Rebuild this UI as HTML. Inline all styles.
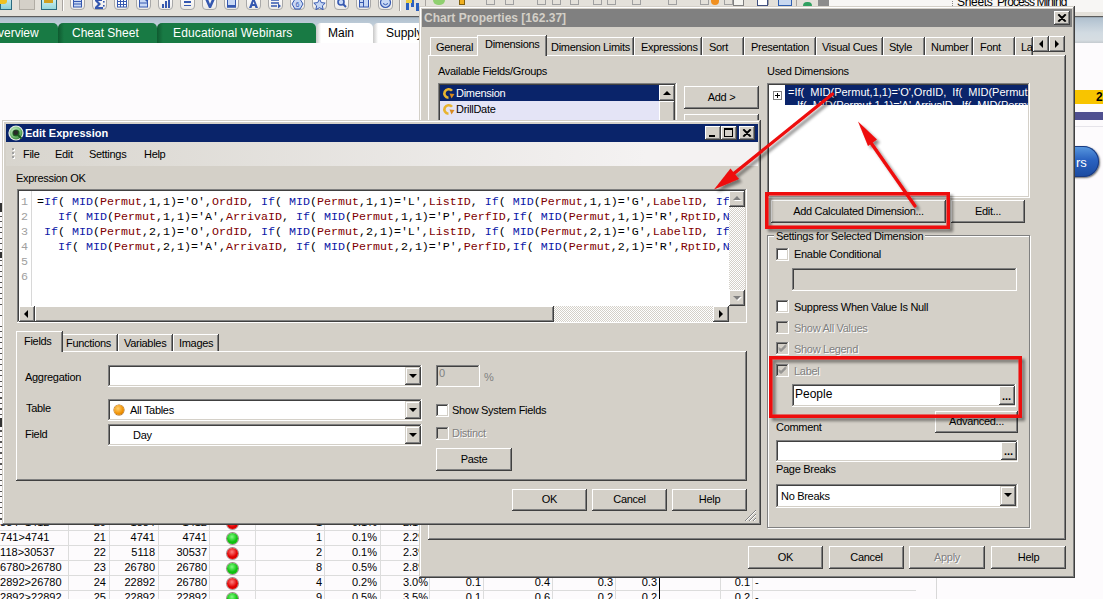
<!DOCTYPE html>
<html><head><meta charset="utf-8">
<style>
*{box-sizing:border-box;margin:0;padding:0}
html,body{width:1103px;height:599px;overflow:hidden;background:#fdfbfd}
body{position:relative;font-family:"Liberation Sans",sans-serif;font-size:11px;color:#000}
.a{position:absolute}
.t{position:absolute;white-space:pre;line-height:13px;letter-spacing:-0.3px}
.face{background:#d4d0c8}
.raised{background:#d4d0c8;box-shadow:inset -1px -1px #404040,inset 1px 1px #fff,inset -2px -2px #808080,inset 2px 2px #d4d0c8}
.sunken{background:#fff;box-shadow:inset -1px -1px #fff,inset 1px 1px #808080,inset -2px -2px #d4d0c8,inset 2px 2px #404040}
.sunkend{background:#d4d0c8;box-shadow:inset -1px -1px #fff,inset 1px 1px #808080,inset -2px -2px #d4d0c8,inset 2px 2px #404040}
.win{background:#d4d0c8;box-shadow:inset -1px -1px #404040,inset 1px 1px #d4d0c8,inset -2px -2px #808080,inset 2px 2px #fff}
.btn{position:absolute;background:#d4d0c8;box-shadow:inset -1px -1px #404040,inset 1px 1px #fff,inset -2px -2px #808080,inset 2px 2px #d4d0c8;text-align:center;white-space:pre;letter-spacing:-0.3px}
.chk{position:absolute;width:13px;height:13px;background:#fff;box-shadow:inset -1px -1px #fff,inset 1px 1px #808080,inset -2px -2px #d4d0c8,inset 2px 2px #404040}
.chk.dis{background:#d4d0c8}
.gray{color:#808080;text-shadow:1px 1px #fff}
.page{position:absolute;background:#d4d0c8;box-shadow:inset -1px -1px #404040,inset 1px 1px #fff,inset -2px -2px #808080}
.tab{position:absolute;background:#d4d0c8;box-shadow:inset -1px 0 #404040,inset 1px 1px #fff,inset -2px 0 #808080;white-space:pre;letter-spacing:-0.3px}
.dd{position:absolute;width:16px;background:#d4d0c8;box-shadow:inset -1px -1px #404040,inset 1px 1px #d4d0c8,inset -2px -2px #808080,inset 2px 2px #fff}
.dd:after{content:"";position:absolute;left:4px;top:7px;border-left:4px solid transparent;border-right:4px solid transparent;border-top:4px solid #000}
.code{position:absolute;font-family:"Liberation Mono",monospace;font-size:11.67px;white-space:pre;line-height:15px;color:#000}
.dith{background-color:#e8e6e2;background-image:repeating-conic-gradient(#d4d0c8 0 25%,#fff 0 50%);background-size:2px 2px}
.k{color:#0c18a8}.f{color:#800000}
</style></head><body>

<!-- ============ BACKGROUND APP ============ -->
<div class="a" style="left:0;top:0;width:1103px;height:16px;background:#e4e1da"></div>
<div class="a" style="left:829px;top:0;width:274px;height:12px;background:#f7f6f4"></div>
<div class="a" style="left:0;top:0;width:12px;height:10px;background:linear-gradient(#bfe6ea,#8fd0d8);border:1px solid #2a6a80;border-top:0"></div>
<div class="a" style="left:0;top:0;width:7px;height:4px;background:#f0c020;border-radius:0 0 3px 0"></div>
<div class="a" style="left:19px;top:0;width:16px;height:10px;background:#d4d0c8;border:1px solid #b0aca4;border-top:0"></div>
<div class="a" style="left:41px;top:0;width:16px;height:10px;background:linear-gradient(#c8eef0,#98d8dc);border:1px solid #2a6a80;border-top:0"></div>
<div class="a" style="left:44px;top:0;width:9px;height:3px;background:#d0a020"></div>
<div class="a" style="left:62px;top:0;width:1px;height:11px;background:#a8a4a0;box-shadow:1px 0 #fff"></div>
<div class="a" style="left:70px;top:-4px;width:15px;height:14px;border:1px solid #a8a8a8;border-radius:4px;background:linear-gradient(#fff,#eceae6)"></div>
<svg class="a" style="left:70px;top:0" width="15" height="10"><rect x="3.5" y="-1" width="8" height="8" fill="#c8d8f4" stroke="#3558b0"/><path d="M4 1.5h7M4 4h7" stroke="#3558b0"/></svg>
<div class="a" style="left:92px;top:-4px;width:15px;height:14px;border:1px solid #a8a8a8;border-radius:4px;background:linear-gradient(#fff,#eceae6)"></div>
<svg class="a" style="left:92px;top:0" width="15" height="10"><path d="M3 -1h7v2H6l3 3-3 3h5v2H3V7l3-3-3-3z" fill="#3558b0"/><rect x="11" y="1" width="1.6" height="1.6" fill="#3558b0"/><rect x="11" y="5" width="1.6" height="1.6" fill="#3558b0"/></svg>
<div class="a" style="left:114px;top:-4px;width:15px;height:14px;border:1px solid #a8a8a8;border-radius:4px;background:linear-gradient(#fff,#eceae6)"></div>
<svg class="a" style="left:114px;top:0" width="15" height="10"><rect x="3.5" y="-1" width="9" height="8" fill="#fff" stroke="#3558b0"/><path d="M3.5 1.5h9M3.5 4.5h9M6.5 -1v8M9.5 -1v8" stroke="#3558b0"/></svg>
<div class="a" style="left:136px;top:-4px;width:15px;height:14px;border:1px solid #a8a8a8;border-radius:4px;background:linear-gradient(#fff,#eceae6)"></div>
<svg class="a" style="left:136px;top:0" width="15" height="10"><rect x="3.5" y="-1" width="8" height="8" fill="#c8d8f4" stroke="#3558b0"/><path d="M4 3h7" stroke="#3558b0"/><path d="M8 -1l5 0-2 3z" fill="#3558b0"/></svg>
<div class="a" style="left:158px;top:-4px;width:15px;height:14px;border:1px solid #a8a8a8;border-radius:4px;background:linear-gradient(#fff,#eceae6)"></div>
<svg class="a" style="left:158px;top:0" width="15" height="10"><rect x="4" y="4" width="2" height="4" fill="#3558b0"/><rect x="7" y="1" width="2" height="7" fill="#3558b0"/><rect x="10" y="-1" width="2" height="9" fill="#3558b0"/></svg>
<div class="a" style="left:180px;top:-4px;width:15px;height:14px;border:1px solid #a8a8a8;border-radius:4px;background:linear-gradient(#fff,#eceae6)"></div>
<svg class="a" style="left:180px;top:0" width="15" height="10"><rect x="4" y="1" width="7" height="2" fill="#3558b0"/><rect x="4" y="5" width="7" height="1" fill="#3558b0"/></svg>
<div class="a" style="left:202px;top:-4px;width:15px;height:14px;border:1px solid #a8a8a8;border-radius:4px;background:linear-gradient(#fff,#eceae6)"></div>
<svg class="a" style="left:202px;top:0" width="15" height="10"><path d="M3 -1h3l2 5 2-5h3l-4 9h-2z" fill="#3558b0"/></svg>
<div class="a" style="left:224px;top:-4px;width:15px;height:14px;border:1px solid #a8a8a8;border-radius:4px;background:linear-gradient(#fff,#eceae6)"></div>
<svg class="a" style="left:224px;top:0" width="15" height="10"><rect x="3.5" y="-1" width="8" height="8" fill="#c8d8f4" stroke="#3558b0"/><rect x="3" y="5" width="9" height="2.5" fill="#3558b0"/></svg>
<div class="a" style="left:246px;top:-4px;width:15px;height:14px;border:1px solid #a8a8a8;border-radius:4px;background:linear-gradient(#fff,#eceae6)"></div>
<svg class="a" style="left:246px;top:0" width="15" height="10"><path d="M3 8l3.5-9h2L12 8H9.5l-.7-2H6.2l-.7 2z M6.8 4h1.6L7.6 1.5z" fill="#3558b0" fill-rule="evenodd"/></svg>
<div class="a" style="left:268px;top:-4px;width:15px;height:14px;border:1px solid #a8a8a8;border-radius:4px;background:linear-gradient(#fff,#eceae6)"></div>
<svg class="a" style="left:268px;top:0" width="15" height="10"><path d="M3 0h8M3 3h8M3 6h6" stroke="#3558b0" stroke-width="1.4"/><path d="M10 3.5l3 2.5-3 2.5z" fill="#3558b0"/></svg>
<div class="a" style="left:290px;top:-4px;width:15px;height:14px;border:1px solid #a8a8a8;border-radius:4px;background:linear-gradient(#fff,#eceae6)"></div>
<svg class="a" style="left:290px;top:0" width="15" height="10"><path d="M2 4l3-5h5l3 5-3 5H5z" fill="#c8d8f4" stroke="#3558b0"/><text x="7.5" y="7" font-size="7" text-anchor="middle" fill="#3558b0" font-family="Liberation Sans">6</text></svg>
<div class="a" style="left:312px;top:-4px;width:15px;height:14px;border:1px solid #a8a8a8;border-radius:4px;background:linear-gradient(#fff,#eceae6)"></div>
<svg class="a" style="left:312px;top:0" width="15" height="10"><path d="M7.5 -1l1.8 3.6 3.9.5-2.8 2.7.7 3.8-3.6-1.9-3.6 1.9.7-3.8-2.8-2.7 3.9-.5z" fill="#c8d8f4" stroke="#3558b0"/></svg>
<div class="a" style="left:334px;top:-4px;width:15px;height:14px;border:1px solid #a8a8a8;border-radius:4px;background:linear-gradient(#fff,#eceae6)"></div>
<svg class="a" style="left:334px;top:0" width="15" height="10"><circle cx="7" cy="2" r="3" fill="#c8d8f4" stroke="#3558b0" stroke-width="1.6"/><path d="M9 4l3 3" stroke="#3558b0" stroke-width="2"/></svg>
<div class="a" style="left:356px;top:-4px;width:15px;height:14px;border:1px solid #a8a8a8;border-radius:4px;background:linear-gradient(#fff,#eceae6)"></div>
<svg class="a" style="left:356px;top:0" width="15" height="10"><rect x="3.5" y="-1" width="9" height="8" fill="#c8d8f4" stroke="#3558b0"/><path d="M7.5 -1v8M3.5 2.5h4" stroke="#3558b0"/></svg>
<div class="a" style="left:378px;top:-4px;width:15px;height:14px;border:1px solid #a8a8a8;border-radius:4px;background:linear-gradient(#fff,#eceae6)"></div>
<svg class="a" style="left:378px;top:0" width="15" height="10"><circle cx="7.5" cy="2.5" r="5" fill="#c8d8f4" stroke="#3558b0" stroke-width="1.2"/><path d="M5 3.5q2.5 2.5 5 0" stroke="#3558b0" fill="none"/></svg>
<div class="a" style="left:399px;top:0;width:1px;height:11px;background:#a8a4a0;box-shadow:1px 0 #fff"></div>
<div class="a" style="left:406px;top:2px;width:3px;height:8px;background:#2a60c0;box-shadow:5px -3px 0 0 #2a60c0,10px 1px 0 0 #2a60c0"></div>
<div class="a" style="left:406px;top:0;width:6px;height:3px;background:#f0d040"></div>
<div class="a" style="left:425px;top:0;width:1px;height:6px;background:#a8a4a0"></div>
<div class="a" style="left:433px;top:0;width:12px;height:5px;background:#90d070;border-radius:0 0 6px 6px"></div>
<div class="a" style="left:459px;top:0;width:6px;height:5px;background:#f0b020;border:1px solid #806010;border-top:0"></div>
<div class="a" style="left:486px;top:0;width:9px;height:5px;border:1px solid #a0a0a0;border-top:0"></div>
<div class="a" style="left:505px;top:0;width:9px;height:5px;border:1px solid #a0a0a0;border-top:0"></div>
<div class="a" style="left:537px;top:0;width:9px;height:5px;border:1px solid #a0a0a0;border-top:0"></div>
<div class="a" style="left:552px;top:0;width:9px;height:5px;border:1px solid #a0a0a0;border-top:0"></div>
<div class="a" style="left:570px;top:0;width:9px;height:5px;border:1px solid #a0a0a0;border-top:0"></div>
<div class="a" style="left:593px;top:0;width:9px;height:5px;border:1px solid #a0a0a0;border-top:0"></div>
<div class="a" style="left:607px;top:0;width:9px;height:5px;border:1px solid #a0a0a0;border-top:0"></div>
<div class="a" style="left:632px;top:0;width:9px;height:5px;border:1px solid #a0a0a0;border-top:0"></div>
<div class="a" style="left:668px;top:0;width:9px;height:5px;border:1px solid #a0a0a0;border-top:0"></div>
<div class="a" style="left:700px;top:0;width:9px;height:5px;border:1px solid #a0a0a0;border-top:0"></div>
<div class="a" style="left:724px;top:0;width:9px;height:5px;border:1px solid #a0a0a0;border-top:0"></div>
<div class="a" style="left:760px;top:0;width:9px;height:5px;border:1px solid #a0a0a0;border-top:0"></div>
<div class="a" style="left:711px;top:0;width:8px;height:5px;background:#f09020;border-radius:0 0 4px 4px"></div>
<div class="a" style="left:733px;top:0;width:11px;height:6px;background:#f4f4f0;border:1px solid #808080;border-top:0"></div>
<div class="a" style="left:757px;top:0;width:11px;height:6px;background:#fff;border:1px solid #405080;border-top:0"></div>
<div class="a" style="left:778px;top:0;width:14px;height:6px;background:#c8d8f0;border:1px solid #3060b0;border-top:0"></div>
<div class="a" style="left:796px;top:0;width:1px;height:6px;background:#a8a4a0"></div>
<div class="a" style="left:803px;top:2px;width:9px;height:4px;background:#30a060;border-radius:5px 5px 0 0"></div>
<div class="a" style="left:818px;top:0;width:11px;height:6px;background:#8c8c8c"></div>
<div class="t" style="left:957px;top:-4px;font-size:12px;letter-spacing:-0.3px">Sheets</div>
<div class="a" style="left:952px;top:1px;width:1px;height:1px;background:#888;box-shadow:0 2px #888,0 4px #888"></div>
<div class="t" style="left:997px;top:-4px;font-size:12px;letter-spacing:-0.9px">Process Mining</div>
<div class="a" style="left:0;top:16px;width:1103px;height:1px;background:#5c5c5c"></div>
<div class="a" style="left:0;top:17px;width:1103px;height:26px;background:linear-gradient(#8a96a0 0,#b0c0ce 1px,#bccad6 6px,#d2dbe2 16px,#d6dde2 23px,#c4cacf 26px)"></div>

<!-- sheet tabs -->
<div class="a" style="left:0;top:23px;width:58px;height:20px;background:#187a44;border-radius:0 5px 0 0"></div>
<div class="t" style="left:-2px;top:27px;font-size:12px;color:#fff;letter-spacing:0">verview</div>
<div class="a" style="left:58px;top:23px;width:99px;height:20px;background:linear-gradient(90deg,#0f5a30,#187a44 6px);border-radius:5px 5px 0 0"></div>
<div class="t" style="left:72px;top:27px;font-size:12px;color:#fff;letter-spacing:0">Cheat Sheet</div>
<div class="a" style="left:157px;top:23px;width:159px;height:20px;background:linear-gradient(90deg,#0f5a30,#187a44 6px);border-radius:5px 5px 0 0"></div>
<div class="t" style="left:173px;top:27px;font-size:12px;color:#fff;letter-spacing:0.15px">Educational Webinars</div>
<div class="a" style="left:316px;top:23px;width:57px;height:20px;background:linear-gradient(90deg,#c8c8c8,#fff 5px);border-radius:5px 5px 0 0"></div>
<div class="t" style="left:328px;top:27px;font-size:12px;letter-spacing:0">Main</div>
<div class="a" style="left:373px;top:23px;width:60px;height:20px;background:linear-gradient(90deg,#c8c8c8,#fff 5px);border-radius:5px 5px 0 0"></div>
<div class="t" style="left:386px;top:27px;font-size:12px;letter-spacing:0">Supply</div>

<!-- background table -->
<div class="a" style="left:0;top:515px;width:1103px;height:84px;overflow:hidden">
<div class="a" style="left:0;top:15px;width:916px;height:1px;background:#dcdcdc"></div>
<div class="a" style="left:0;top:30px;width:916px;height:1px;background:#dcdcdc"></div>
<div class="a" style="left:0;top:45px;width:916px;height:1px;background:#dcdcdc"></div>
<div class="a" style="left:0;top:60px;width:916px;height:1px;background:#dcdcdc"></div>
<div class="a" style="left:0;top:75px;width:916px;height:1px;background:#dcdcdc"></div>
<div class="a" style="left:68px;top:0;width:1px;height:84px;background:#dcdcdc"></div>
<div class="a" style="left:109px;top:0;width:1px;height:84px;background:#dcdcdc"></div>
<div class="a" style="left:158px;top:0;width:1px;height:84px;background:#dcdcdc"></div>
<div class="a" style="left:209px;top:0;width:1px;height:84px;background:#dcdcdc"></div>
<div class="a" style="left:255px;top:0;width:1px;height:84px;background:#dcdcdc"></div>
<div class="a" style="left:324px;top:0;width:1px;height:84px;background:#dcdcdc"></div>
<div class="a" style="left:380px;top:0;width:1px;height:84px;background:#dcdcdc"></div>
<div class="a" style="left:429px;top:0;width:1px;height:84px;background:#dcdcdc"></div>
<div class="a" style="left:483px;top:0;width:1px;height:84px;background:#dcdcdc"></div>
<div class="a" style="left:552px;top:0;width:1px;height:84px;background:#dcdcdc"></div>
<div class="a" style="left:615px;top:0;width:1px;height:84px;background:#dcdcdc"></div>
<div class="a" style="left:720px;top:0;width:1px;height:84px;background:#dcdcdc"></div>
<div class="a" style="left:752px;top:0;width:1px;height:84px;background:#dcdcdc"></div>
<div class="a" style="left:659px;top:0;width:1px;height:84px;background:#000"></div>
<div class="a" style="left:936px;top:0;width:1px;height:84px;background:#d8d8d8"></div>
<div class="a" style="left:937px;top:0;width:166px;height:84px;background:#fdfbfd"></div>
<div class="t" style="left:-6px;top:1px;letter-spacing:0">1884&gt;1412</div>
<div class="t" style="right:997px;top:1px;letter-spacing:0">20</div>
<div class="t" style="right:948px;top:1px;letter-spacing:0">1884</div>
<div class="t" style="right:896px;top:1px;letter-spacing:0">1412</div>
<div class="t" style="right:781px;top:1px;letter-spacing:0">1</div>
<div class="t" style="right:726px;top:1px;letter-spacing:0">0.1%</div>
<div class="t" style="right:675px;top:1px;letter-spacing:0">2.1%</div>
<div class="a" style="left:227px;top:3px;width:11px;height:11px;border-radius:50%;background:radial-gradient(circle at 45% 35%,#ff8080,#e00000 55%,#e00000);box-shadow:0 0 0 1px rgba(80,40,40,.55)"></div>
<div class="t" style="left:-6px;top:16px;letter-spacing:0">4741&gt;4741</div>
<div class="t" style="right:997px;top:16px;letter-spacing:0">21</div>
<div class="t" style="right:948px;top:16px;letter-spacing:0">4741</div>
<div class="t" style="right:896px;top:16px;letter-spacing:0">4741</div>
<div class="t" style="right:781px;top:16px;letter-spacing:0">1</div>
<div class="t" style="right:726px;top:16px;letter-spacing:0">0.1%</div>
<div class="t" style="right:675px;top:16px;letter-spacing:0">2.2%</div>
<div class="a" style="left:227px;top:18px;width:11px;height:11px;border-radius:50%;background:radial-gradient(circle at 45% 35%,#80ff80,#10c010 55%,#10c010);box-shadow:0 0 0 1px rgba(80,40,40,.55)"></div>
<div class="t" style="left:-6px;top:31px;letter-spacing:0">5118&gt;30537</div>
<div class="t" style="right:997px;top:31px;letter-spacing:0">22</div>
<div class="t" style="right:948px;top:31px;letter-spacing:0">5118</div>
<div class="t" style="right:896px;top:31px;letter-spacing:0">30537</div>
<div class="t" style="right:781px;top:31px;letter-spacing:0">2</div>
<div class="t" style="right:726px;top:31px;letter-spacing:0">0.1%</div>
<div class="t" style="right:675px;top:31px;letter-spacing:0">2.3%</div>
<div class="a" style="left:227px;top:33px;width:11px;height:11px;border-radius:50%;background:radial-gradient(circle at 45% 35%,#ff8080,#e00000 55%,#e00000);box-shadow:0 0 0 1px rgba(80,40,40,.55)"></div>
<div class="t" style="left:-6px;top:46px;letter-spacing:0">26780&gt;26780</div>
<div class="t" style="right:997px;top:46px;letter-spacing:0">23</div>
<div class="t" style="right:948px;top:46px;letter-spacing:0">26780</div>
<div class="t" style="right:896px;top:46px;letter-spacing:0">26780</div>
<div class="t" style="right:781px;top:46px;letter-spacing:0">8</div>
<div class="t" style="right:726px;top:46px;letter-spacing:0">0.5%</div>
<div class="t" style="right:675px;top:46px;letter-spacing:0">2.8%</div>
<div class="a" style="left:227px;top:48px;width:11px;height:11px;border-radius:50%;background:radial-gradient(circle at 45% 35%,#80ff80,#10c010 55%,#10c010);box-shadow:0 0 0 1px rgba(80,40,40,.55)"></div>
<div class="t" style="left:-6px;top:61px;letter-spacing:0">22892&gt;26780</div>
<div class="t" style="right:997px;top:61px;letter-spacing:0">24</div>
<div class="t" style="right:948px;top:61px;letter-spacing:0">22892</div>
<div class="t" style="right:896px;top:61px;letter-spacing:0">26780</div>
<div class="t" style="right:781px;top:61px;letter-spacing:0">4</div>
<div class="t" style="right:726px;top:61px;letter-spacing:0">0.2%</div>
<div class="t" style="right:675px;top:61px;letter-spacing:0">3.0%</div>
<div class="t" style="right:622px;top:61px;letter-spacing:0">0.1</div>
<div class="t" style="right:553px;top:61px;letter-spacing:0">0.4</div>
<div class="t" style="right:490px;top:61px;letter-spacing:0">0.3</div>
<div class="t" style="right:446px;top:61px;letter-spacing:0">0.3</div>
<div class="t" style="right:353px;top:61px;letter-spacing:0">0.1</div>
<div class="t" style="left:755px;top:61px;letter-spacing:0">-</div>
<div class="a" style="left:227px;top:63px;width:11px;height:11px;border-radius:50%;background:radial-gradient(circle at 45% 35%,#ff8080,#e00000 55%,#e00000);box-shadow:0 0 0 1px rgba(80,40,40,.55)"></div>
<div class="t" style="left:-6px;top:76px;letter-spacing:0">22892&gt;22892</div>
<div class="t" style="right:997px;top:76px;letter-spacing:0">25</div>
<div class="t" style="right:948px;top:76px;letter-spacing:0">22892</div>
<div class="t" style="right:896px;top:76px;letter-spacing:0">22892</div>
<div class="t" style="right:781px;top:76px;letter-spacing:0">9</div>
<div class="t" style="right:726px;top:76px;letter-spacing:0">0.5%</div>
<div class="t" style="right:675px;top:76px;letter-spacing:0">3.5%</div>
<div class="t" style="right:622px;top:76px;letter-spacing:0">0.1</div>
<div class="t" style="right:553px;top:76px;letter-spacing:0">0.6</div>
<div class="t" style="right:490px;top:76px;letter-spacing:0">0.2</div>
<div class="t" style="right:446px;top:76px;letter-spacing:0">0.2</div>
<div class="t" style="right:353px;top:76px;letter-spacing:0">0.2</div>
<div class="t" style="left:755px;top:76px;letter-spacing:0">-</div>
<div class="a" style="left:227px;top:78px;width:11px;height:11px;border-radius:50%;background:radial-gradient(circle at 45% 35%,#80ff80,#10c010 55%,#10c010);box-shadow:0 0 0 1px rgba(80,40,40,.55)"></div>
</div>
<div class="a" style="left:0;top:213px;width:2px;height:311px;background:repeating-linear-gradient(#fdfbfd 0 3px,#555 3px 4px,#fdfbfd 4px 5.5px)"></div>
<div class="a" style="left:0;top:203px;width:2px;height:9px;background:#333"></div>
<div class="a" style="left:0;top:252px;width:2px;height:6px;background:#333"></div>
<div class="a" style="left:0;top:418px;width:2px;height:9px;background:#333"></div>
<!-- right side background -->
<div class="a" style="left:1075px;top:90px;width:28px;height:14px;background:#f8c400"></div>
<div class="t" style="left:1096px;top:91px;font-size:12px;font-weight:bold">2</div>
<div class="a" style="left:1075px;top:112px;width:28px;height:8px;background:#505090"></div>
<div class="a" style="left:1075px;top:126px;width:28px;height:1px;background:#e6e4ea"></div>
<div class="a" style="left:1040px;top:146px;width:59px;height:31px;border-radius:16px;background:linear-gradient(#5a9ae0,#2a62c0 45%,#1a4aa0);box-shadow:inset 0 0 0 1px #1a3a80,1px 1px 2px #666"></div>
<div class="t" style="left:1076px;top:156px;font-size:13px;color:#fff;letter-spacing:0">rs</div>

<!-- ============ CHART PROPERTIES ============ -->
<div id="cp" class="a win" style="left:419px;top:6px;width:656px;height:572px"></div>
<div class="a" style="left:422px;top:9px;width:650px;height:18px;background:#808080"></div>
<div class="t" style="left:424px;top:12px;font-size:12px;font-weight:bold;color:#d4d0c8;letter-spacing:0">Chart Properties [162.37]</div>
<div class="btn" style="left:1054px;top:11px;width:16px;height:14px"></div>
<svg class="a" style="left:1054px;top:11px" width="16" height="14"><path d="M4 3.5 L11 10.5 M5 3.5 L12 10.5 M11 3.5 L4 10.5 M12 3.5 L5 10.5" stroke="#000" stroke-width="1.1"/></svg>

<!-- tab page -->
<div class="page" style="left:428px;top:55px;width:638px;height:485px"></div>
<div class="tab" style="left:430px;top:37px;width:50px;height:18px"></div><div class="t" style="left:436px;top:41px">General</div>
<div class="tab" style="left:546px;top:37px;width:88px;height:18px"></div><div class="t" style="left:551px;top:41px">Dimension Limits</div>
<div class="tab" style="left:634px;top:37px;width:68px;height:18px"></div><div class="t" style="left:641px;top:41px">Expressions</div>
<div class="tab" style="left:702px;top:37px;width:42px;height:18px"></div><div class="t" style="left:709px;top:41px">Sort</div>
<div class="tab" style="left:744px;top:37px;width:72px;height:18px"></div><div class="t" style="left:751px;top:41px">Presentation</div>
<div class="tab" style="left:816px;top:37px;width:67px;height:18px"></div><div class="t" style="left:822px;top:41px">Visual Cues</div>
<div class="tab" style="left:883px;top:37px;width:42px;height:18px"></div><div class="t" style="left:889px;top:41px">Style</div>
<div class="tab" style="left:925px;top:37px;width:48px;height:18px"></div><div class="t" style="left:931px;top:41px">Number</div>
<div class="tab" style="left:973px;top:37px;width:42px;height:18px"></div><div class="t" style="left:980px;top:41px">Font</div>
<div class="tab" style="left:1015px;top:37px;width:18px;height:18px"></div><div class="t" style="left:1021px;top:41px">La</div>
<div class="tab" style="left:477px;top:35px;width:70px;height:21px;box-shadow:inset -1px 0 #404040,inset 1px 1px #fff,inset -2px 0 #808080"></div><div class="t" style="left:485px;top:38px">Dimensions</div>
<div class="btn" style="left:1033px;top:36px;width:16px;height:16px"></div>
<div class="btn" style="left:1049px;top:36px;width:16px;height:16px"></div>
<div class="a" style="left:1039px;top:40px;width:0;height:0;border-top:4px solid transparent;border-bottom:4px solid transparent;border-right:4px solid #000"></div>
<div class="a" style="left:1055px;top:40px;width:0;height:0;border-top:4px solid transparent;border-bottom:4px solid transparent;border-left:4px solid #000"></div>

<!-- left pane -->
<div class="t" style="left:438px;top:65px">Available Fields/Groups</div>
<div class="a sunken" style="left:438px;top:83px;width:239px;height:60px"></div>
<div class="a" style="left:440px;top:85px;width:219px;height:16px;background:#0a246a"></div>
<div class="a" style="left:440px;top:101px;width:219px;height:20px;background:#e4e4f6"></div>
<div class="a" style="left:659px;top:85px;width:16px;height:40px;background:#d4d0c8"></div>
<div class="btn" style="left:659px;top:85px;width:16px;height:16px"></div>
<div class="a" style="left:663px;top:91px;width:0;height:0;border-left:4px solid transparent;border-right:4px solid transparent;border-bottom:4px solid #000"></div>
<div class="btn" style="left:659px;top:101px;width:16px;height:25px"></div>
<svg class="a" style="left:442px;top:87px" width="13" height="13"><path d="M10 3.8 A4.3 4.3 0 1 0 6.5 10.8" fill="none" stroke="#e8b430" stroke-width="2.6"/><path d="M7.5 6.5 L12.5 7 L9.5 11.5 Z" fill="#d88a20"/></svg>
<svg class="a" style="left:442px;top:103px" width="13" height="13"><path d="M10 3.8 A4.3 4.3 0 1 0 6.5 10.8" fill="none" stroke="#e8b430" stroke-width="2.6"/><path d="M7.5 6.5 L12.5 7 L9.5 11.5 Z" fill="#d88a20"/></svg>
<div class="t" style="left:456px;top:87px;color:#fff">Dimension</div>
<div class="t" style="left:456px;top:103px">DrillDate</div>
<div class="btn" style="left:684px;top:86px;width:75px;height:23px;line-height:22px">Add &gt;</div>
<div class="btn" style="left:684px;top:114px;width:75px;height:23px"></div>

<!-- right pane -->
<div class="t" style="left:767px;top:65px">Used Dimensions</div>
<div class="a sunken" style="left:767px;top:83px;width:263px;height:115px"></div>
<div class="a" style="left:785px;top:85px;width:243px;height:20px;background:#0a246a;overflow:hidden">
<div class="t" style="left:3px;top:1px;color:#fff;letter-spacing:0px">=If(  MID(Permut,1,1)='O',OrdID,  If(  MID(Permut,1,1)='L',ListID</div>
<div class="t" style="left:12px;top:14px;color:#fff;letter-spacing:-0.05px">If(  MID(Permut,1,1)='A',ArrivalD,  If(  MID(Permut,1,1)='P'</div>
</div>
<div class="a" style="left:773px;top:91px;width:9px;height:9px;border:1px solid #808080;background:#fff"></div>
<div class="a" style="left:775px;top:95px;width:5px;height:1px;background:#000"></div>
<div class="a" style="left:777px;top:93px;width:1px;height:5px;background:#000"></div>
<div class="btn" style="left:771px;top:200px;width:175px;height:23px;line-height:22px">Add Calculated Dimension...</div>
<div class="btn" style="left:951px;top:200px;width:74px;height:23px;line-height:22px">Edit...</div>

<!-- group box -->
<div class="a" style="left:767px;top:235px;width:263px;height:293px;border:1px solid #808080;box-shadow:1px 1px #fff,inset 1px 1px #fff"></div>
<div class="t" style="left:774px;top:230px;background:#d4d0c8;padding:0 2px">Settings for Selected Dimension</div>
<div class="chk" style="left:776px;top:248px"></div><div class="t" style="left:794px;top:248px">Enable Conditional</div>
<div class="a sunkend" style="left:792px;top:268px;width:225px;height:23px"></div>
<div class="chk" style="left:776px;top:300px"></div><div class="t" style="left:794px;top:301px">Suppress When Value Is Null</div>
<div class="chk dis" style="left:776px;top:321px"></div><div class="t gray" style="left:794px;top:322px">Show All Values</div>
<div class="chk dis" style="left:776px;top:342px"></div><div class="t gray" style="left:794px;top:343px">Show Legend</div>
<div class="chk dis" style="left:776px;top:364px"></div><div class="t gray" style="left:794px;top:365px">Label</div>
<svg class="a" style="left:776px;top:342px" width="13" height="13"><path d="M3 5.5 L5 7.5 L10 2.5 M3 6.5 L5 8.5 L10 3.5 M3 7.5 L5 9.5 L10 4.5" stroke="#808080" fill="none" stroke-width="1"/></svg>
<svg class="a" style="left:776px;top:364px" width="13" height="13"><path d="M3 5.5 L5 7.5 L10 2.5 M3 6.5 L5 8.5 L10 3.5 M3 7.5 L5 9.5 L10 4.5" stroke="#808080" fill="none" stroke-width="1"/></svg>
<div class="a sunken" style="left:792px;top:384px;width:224px;height:23px"></div>
<div class="t" style="left:795px;top:388px;font-size:12px;letter-spacing:0">People</div>
<div class="btn" style="left:999px;top:386px;width:16px;height:19px"></div>
<div class="t" style="left:1002px;top:390px;font-weight:bold;letter-spacing:0">...</div>
<div class="btn" style="left:935px;top:411px;width:83px;height:22px;line-height:21px">Advanced...</div>
<div class="t" style="left:776px;top:421px">Comment</div>
<div class="a sunken" style="left:776px;top:440px;width:242px;height:22px"></div>
<div class="btn" style="left:1001px;top:442px;width:16px;height:18px"></div>
<div class="t" style="left:1004px;top:445px;font-weight:bold;letter-spacing:0">...</div>
<div class="t" style="left:776px;top:463px">Page Breaks</div>
<div class="a sunken" style="left:776px;top:484px;width:242px;height:24px"></div>
<div class="t" style="left:781px;top:490px">No Breaks</div>
<div class="dd" style="left:1000px;top:486px;height:20px"></div>

<div class="btn" style="left:748px;top:546px;width:75px;height:23px;line-height:22px">OK</div>
<div class="btn" style="left:829px;top:546px;width:75px;height:23px;line-height:22px">Cancel</div>
<div class="btn gray" style="left:909px;top:546px;width:76px;height:23px;line-height:22px">Apply</div>
<div class="btn" style="left:991px;top:546px;width:75px;height:23px;line-height:22px">Help</div>

<!-- ============ EDIT EXPRESSION ============ -->
<div id="ee" class="a win" style="left:2px;top:120px;width:759px;height:405px"></div>
<div class="a" style="left:6px;top:124px;width:752px;height:18px;background:#0a246a"></div>
<svg class="a" style="left:7px;top:124px" width="18" height="18"><defs><radialGradient id="qg" cx="0.4" cy="0.35" r="0.7"><stop offset="0" stop-color="#d8f0d8"/><stop offset="0.6" stop-color="#7cc27c"/><stop offset="1" stop-color="#2e7d32"/></radialGradient></defs><circle cx="9" cy="9" r="7.6" fill="#e8ece8"/><circle cx="9" cy="9" r="6.4" fill="url(#qg)"/><circle cx="9" cy="9" r="3.6" fill="#1e5e22"/><circle cx="8.7" cy="8.7" r="2.4" fill="#2a2a2a"/><path d="M11 11 L14.5 14.5" stroke="#1e5e22" stroke-width="2"/></svg>
<div class="t" style="left:25px;top:127px;font-weight:bold;color:#fff;letter-spacing:0">Edit Expression</div>
<div class="btn" style="left:705px;top:126px;width:16px;height:14px"></div>
<div class="a" style="left:709px;top:135px;width:6px;height:2px;background:#000"></div>
<div class="btn" style="left:721px;top:126px;width:16px;height:14px"></div>
<div class="a" style="left:724px;top:128px;width:9px;height:9px;border:1px solid #000;border-top-width:2px"></div>
<div class="btn" style="left:739px;top:126px;width:16px;height:14px"></div>
<svg class="a" style="left:739px;top:126px" width="16" height="14"><path d="M4 3.5 L11 10.5 M5 3.5 L12 10.5 M11 3.5 L4 10.5 M12 3.5 L5 10.5" stroke="#000" stroke-width="1.1"/></svg>

<!-- menu bar -->
<div class="a" style="left:6px;top:142px;width:752px;height:24px;background:linear-gradient(90deg,#d8d5ce,#f4f2f2 85%)"></div>
<div class="a" style="left:12px;top:148px;width:2px;height:2px;background:#a0a0a0;box-shadow:0 4px #a0a0a0,0 8px #a0a0a0,1px 1px #fff,1px 5px #fff,1px 9px #fff"></div>
<div class="t" style="left:23px;top:148px">File</div>
<div class="t" style="left:55px;top:148px">Edit</div>
<div class="t" style="left:89px;top:148px">Settings</div>
<div class="t" style="left:144px;top:148px">Help</div>

<div class="t" style="left:16px;top:172px">Expression OK</div>

<!-- editor -->
<div class="a sunken" style="left:17px;top:189px;width:730px;height:134px"></div>
<div class="a" style="left:19px;top:191px;width:710px;height:115px;background:#fff;overflow:hidden">
<div class="a" style="left:12px;top:0;width:1px;height:115px;background:#d8d8d8"></div>
<div class="code" style="left:2px;top:4px;color:#a0a0a0">1
2
3
4
5
6</div>
<div class="code" style="left:18px;top:4px">=<span class="k">If</span>( <span class="k">MID</span>(<span class="f">Permut</span>,1,1)='O',<span class="f">OrdID</span>, <span class="k">If</span>( <span class="k">MID</span>(<span class="f">Permut</span>,1,1)='L',<span class="f">ListID</span>, <span class="k">If</span>( <span class="k">MID</span>(<span class="f">Permut</span>,1,1)='G',<span class="f">LabelID</span>, <span class="k">If</span>
   <span class="k">If</span>( <span class="k">MID</span>(<span class="f">Permut</span>,1,1)='A',<span class="f">ArrivaID</span>, <span class="k">If</span>( <span class="k">MID</span>(<span class="f">Permut</span>,1,1)='P',<span class="f">PerfID</span>,<span class="k">If</span>( <span class="k">MID</span>(<span class="f">Permut</span>,1,1)='R',<span class="f">RptID</span>,<span class="k">N</span>
 <span class="k">If</span>( <span class="k">MID</span>(<span class="f">Permut</span>,2,1)='O',<span class="f">OrdID</span>, <span class="k">If</span>( <span class="k">MID</span>(<span class="f">Permut</span>,2,1)='L',<span class="f">ListID</span>, <span class="k">If</span>( <span class="k">MID</span>(<span class="f">Permut</span>,2,1)='G',<span class="f">LabelID</span>, <span class="k">If</span>
   <span class="k">If</span>( <span class="k">MID</span>(<span class="f">Permut</span>,2,1)='A',<span class="f">ArrivaID</span>, <span class="k">If</span>( <span class="k">MID</span>(<span class="f">Permut</span>,2,1)='P',<span class="f">PerfID</span>,<span class="k">If</span>( <span class="k">MID</span>(<span class="f">Permut</span>,2,1)='R',<span class="f">RptID</span>,<span class="k">N</span></div>
</div>
<!-- v scroll -->
<div class="a dith" style="left:729px;top:191px;width:16px;height:115px"></div>
<div class="btn" style="left:729px;top:191px;width:16px;height:16px"></div>
<div class="a" style="left:733px;top:196px;width:0;height:0;border-left:4px solid transparent;border-right:4px solid transparent;border-bottom:4px solid #808080;filter:drop-shadow(1px 1px #fff)"></div>
<div class="btn" style="left:729px;top:290px;width:16px;height:16px"></div>
<div class="a" style="left:733px;top:296px;width:0;height:0;border-left:4px solid transparent;border-right:4px solid transparent;border-top:4px solid #808080;filter:drop-shadow(1px 1px #fff)"></div>
<!-- h scroll -->
<div class="a dith" style="left:19px;top:306px;width:710px;height:16px"></div>
<div class="btn" style="left:19px;top:306px;width:16px;height:16px"></div>
<div class="a" style="left:24px;top:310px;width:0;height:0;border-top:4px solid transparent;border-bottom:4px solid transparent;border-right:4px solid #000"></div>
<div class="btn" style="left:35px;top:306px;width:519px;height:16px"></div>
<div class="btn" style="left:713px;top:306px;width:16px;height:16px"></div>
<div class="a" style="left:719px;top:310px;width:0;height:0;border-top:4px solid transparent;border-bottom:4px solid transparent;border-left:4px solid #000"></div>
<div class="a" style="left:729px;top:306px;width:16px;height:16px;background:#d4d0c8"></div>

<!-- lower tabs -->
<div class="page" style="left:16px;top:351px;width:731px;height:130px"></div>
<div class="tab" style="left:62px;top:334px;width:56px;height:17px"></div><div class="t" style="left:66px;top:337px">Functions</div>
<div class="tab" style="left:118px;top:334px;width:55px;height:17px"></div><div class="t" style="left:124px;top:337px">Variables</div>
<div class="tab" style="left:173px;top:334px;width:46px;height:17px"></div><div class="t" style="left:179px;top:337px">Images</div>
<div class="tab" style="left:16px;top:331px;width:47px;height:21px"></div><div class="t" style="left:24px;top:335px">Fields</div>

<div class="t" style="left:25px;top:371px">Aggregation</div>
<div class="a sunken" style="left:108px;top:365px;width:314px;height:22px"></div>
<div class="dd" style="left:405px;top:367px;height:18px"></div>
<div class="a sunkend" style="left:436px;top:365px;width:44px;height:22px"></div>
<div class="t gray" style="left:439px;top:367px;text-shadow:none">0</div>
<div class="t gray" style="left:484px;top:371px;text-shadow:none">%</div>

<div class="t" style="left:26px;top:402px">Table</div>
<div class="a sunken" style="left:108px;top:399px;width:314px;height:22px"></div>
<div class="dd" style="left:405px;top:401px;height:18px"></div>
<div class="a" style="left:114px;top:405px;width:10px;height:10px;border-radius:50%;background:radial-gradient(circle at 40% 35%,#ffd070,#f09000 60%,#b06000);box-shadow:0 0 0 0.5px #a05800"></div>
<div class="t" style="left:130px;top:404px">All Tables</div>

<div class="t" style="left:25px;top:428px">Field</div>
<div class="a sunken" style="left:108px;top:424px;width:314px;height:22px"></div>
<div class="dd" style="left:405px;top:426px;height:18px"></div>
<div class="t" style="left:133px;top:429px">Day</div>

<div class="chk" style="left:436px;top:404px"></div><div class="t" style="left:452px;top:404px">Show System Fields</div>
<div class="chk dis" style="left:436px;top:427px"></div><div class="t gray" style="left:452px;top:427px">Distinct</div>
<div class="btn" style="left:436px;top:448px;width:76px;height:23px;line-height:22px">Paste</div>

<div class="btn" style="left:512px;top:489px;width:75px;height:22px;line-height:21px">OK</div>
<div class="btn" style="left:592px;top:489px;width:75px;height:22px;line-height:21px">Cancel</div>
<div class="btn" style="left:672px;top:489px;width:75px;height:22px;line-height:21px">Help</div>
<svg class="a" style="left:744px;top:509px" width="13" height="13"><path d="M12 1 L1 12 M12 5 L5 12 M12 9 L9 12" stroke="#808080" stroke-width="1"/><path d="M12 2 L2 12 M12 6 L6 12 M12 10 L10 12" stroke="#fff" stroke-width="1"/></svg>


<!-- ============ ANNOTATIONS ============ -->
<svg class="a" style="left:0;top:0" width="1103" height="599">
<defs><filter id="sh" x="-20%" y="-20%" width="140%" height="140%"><feGaussianBlur in="SourceAlpha" stdDeviation="1.6"/><feOffset dx="2.5" dy="2.5" result="b"/><feComponentTransfer><feFuncA type="linear" slope="0.45"/></feComponentTransfer><feMerge><feMergeNode/><feMergeNode in="SourceGraphic"/></feMerge></filter></defs>
<g filter="url(#sh)">
<rect x="766.75" y="193.75" width="181.5" height="33.5" fill="none" stroke="#ee0a0a" stroke-width="3.5"/>
<rect x="770.75" y="357.75" width="249.5" height="58.5" fill="none" stroke="#ee0a0a" stroke-width="3.5"/>
<path d="M832.5 94 L727 179" stroke="#ee0a0a" stroke-width="3.3" stroke-linecap="round"/>
<path d="M714 189.5 L730.5 168.5 L739 179 Z" fill="#ee0a0a"/>
<path d="M915 206 L869 140" stroke="#ee0a0a" stroke-width="3.3" stroke-linecap="round"/>
<path d="M858 121.5 L877 139.5 L868 146 Z" fill="#ee0a0a"/>
</g>
</svg>
</body></html>
